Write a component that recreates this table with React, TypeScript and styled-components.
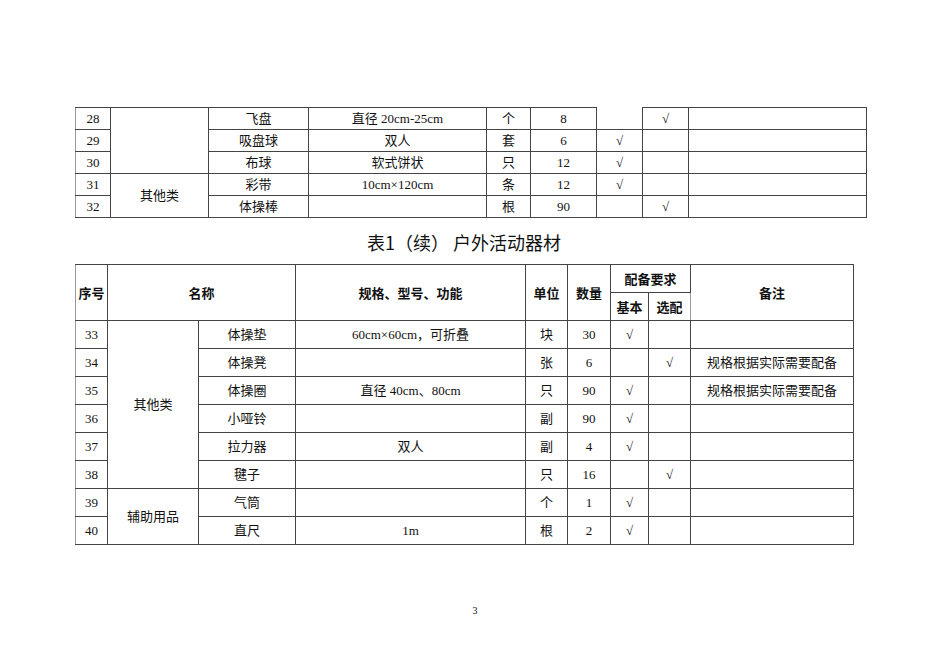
import { FC } from 'react';
import styled, { createGlobalStyle } from 'styled-components';

const GlobalStyle = createGlobalStyle`
    html, body {
        margin: 0;
        padding: 0;
        background: #fff;
    }
`;

const Page = styled.div`
    width: 950px;
    min-height: 672px;
    box-sizing: border-box;
    padding: 107px 0 0 75px;
    font-family: 'Liberation Serif', 'Noto Sans CJK SC', serif;
    color: #111;
`;

const Table = styled.table<{ $width: number }>`
    width: ${(p) => p.$width}px;
    border-collapse: collapse;
    table-layout: fixed;
    font-size: 13px;
`;

const Col = styled.col<{ $w: number }>`
    width: ${(p) => p.$w}px;
`;

const Cell = styled.td<{ $h: number; $soft?: boolean; $noTop?: boolean }>`
    height: ${(p) => p.$h}px;
    padding: 0;
    box-sizing: border-box;
    border: 1px solid #444;
    border-left-color: ${(p) => (p.$soft ? '#9a9a9a' : '#444')};
    border-top-style: ${(p) => (p.$noTop ? 'none' : 'solid')};
    text-align: center;
    vertical-align: middle;
    line-height: 16px;
    white-space: nowrap;
`;

const HeadCell = styled.th<{ $soft?: boolean }>`
    height: 28px;
    padding: 0;
    box-sizing: border-box;
    border: 1px solid #444;
    border-left-color: ${(p) => (p.$soft ? '#9a9a9a' : '#444')};
    font-family: 'Noto Sans CJK SC', sans-serif;
    font-weight: 700;
    font-size: 13px;
    text-align: center;
    vertical-align: middle;
    white-space: nowrap;
`;

const Title = styled.div`
    width: 778px;
    margin: 12px 0 10px;
    text-align: center;
    font-family: 'Noto Sans CJK SC', sans-serif;
    font-size: 18px;
    line-height: 24px;
    color: #111;
`;

const PageNo = styled.div`
    margin: 60px 0 0 -75px;
    width: 950px;
    text-align: center;
    font-size: 10px;
    font-family: 'Liberation Serif', serif;
`;

const tick = '√';

interface IRow {
    no: number;
    name: string;
    spec: string;
    unit: string;
    qty: string;
    basic?: boolean;
    optional?: boolean;
    note?: string;
}

const firstCols = [35, 98, 100, 178, 44, 66, 46, 46, 178];
const secondCols = [32, 91, 97, 230, 42, 43, 38, 42, 163];

const firstRows: IRow[] = [
    { no: 28, name: '飞盘', spec: '直径 20cm-25cm', unit: '个', qty: '8', optional: true },
    { no: 29, name: '吸盘球', spec: '双人', unit: '套', qty: '6', basic: true },
    { no: 30, name: '布球', spec: '软式饼状', unit: '只', qty: '12', basic: true },
    { no: 31, name: '彩带', spec: '10cm×120cm', unit: '条', qty: '12', basic: true },
    { no: 32, name: '体操棒', spec: '', unit: '根', qty: '90', optional: true },
];

const secondRows: IRow[] = [
    { no: 33, name: '体操垫', spec: '60cm×60cm，可折叠', unit: '块', qty: '30', basic: true },
    { no: 34, name: '体操凳', spec: '', unit: '张', qty: '6', optional: true, note: '规格根据实际需要配备' },
    { no: 35, name: '体操圈', spec: '直径 40cm、80cm', unit: '只', qty: '90', basic: true, note: '规格根据实际需要配备' },
    { no: 36, name: '小哑铃', spec: '', unit: '副', qty: '90', basic: true },
    { no: 37, name: '拉力器', spec: '双人', unit: '副', qty: '4', basic: true },
    { no: 38, name: '毽子', spec: '', unit: '只', qty: '16', optional: true },
    { no: 39, name: '气筒', spec: '', unit: '个', qty: '1', basic: true },
    { no: 40, name: '直尺', spec: '1m', unit: '根', qty: '2', basic: true },
];

// category cells: which row starts a group and how many rows it spans
const firstGroups: Record<number, { label: string; span: number }> = {
    28: { label: '', span: 3 },
    31: { label: '其他类', span: 2 },
};

const secondGroups: Record<number, { label: string; span: number }> = {
    33: { label: '其他类', span: 6 },
    39: { label: '辅助用品', span: 2 },
};

interface IBody {
    rows: IRow[];
    groups: Record<number, { label: string; span: number }>;
    h: number;
    openTop?: boolean;
}

const Body: FC<IBody> = ({ rows, groups, h, openTop }) => (
    <tbody>
        {rows.map((r, i) => (
            <tr key={r.no}>
                <Cell $h={h} $soft>{r.no}</Cell>
                {groups[r.no] && (
                    <Cell $h={h} rowSpan={groups[r.no].span}>
                        {groups[r.no].label}
                    </Cell>
                )}
                <Cell $h={h}>{r.name}</Cell>
                <Cell $h={h} $soft>{r.spec}</Cell>
                <Cell $h={h}>{r.unit}</Cell>
                <Cell $h={h}>{r.qty}</Cell>
                <Cell $h={h} $noTop={openTop && i === 0}>{r.basic ? tick : ''}</Cell>
                <Cell $h={h}>{r.optional ? tick : ''}</Cell>
                <Cell $h={h} $soft>{r.note}</Cell>
            </tr>
        ))}
    </tbody>
);

const TableOne: FC = () => (
    <Table $width={791}>
        <colgroup>
            {firstCols.map((w, i) => (
                <Col key={i} $w={w} />
            ))}
        </colgroup>
        <Body rows={firstRows} groups={firstGroups} h={22} openTop />
    </Table>
);

const TableTwo: FC = () => (
    <Table $width={778}>
        <colgroup>
            {secondCols.map((w, i) => (
                <Col key={i} $w={w} />
            ))}
        </colgroup>
        <thead>
            <tr>
                <HeadCell $soft rowSpan={2}>序号</HeadCell>
                <HeadCell colSpan={2} rowSpan={2}>名称</HeadCell>
                <HeadCell $soft rowSpan={2}>规格、型号、功能</HeadCell>
                <HeadCell rowSpan={2}>单位</HeadCell>
                <HeadCell rowSpan={2}>数量</HeadCell>
                <HeadCell colSpan={2}>配备要求</HeadCell>
                <HeadCell $soft rowSpan={2}>备注</HeadCell>
            </tr>
            <tr>
                <HeadCell>基本</HeadCell>
                <HeadCell>选配</HeadCell>
            </tr>
        </thead>
        <Body rows={secondRows} groups={secondGroups} h={28} />
    </Table>
);

const App: FC = () => (
    <>
        <GlobalStyle />
        <Page>
            <TableOne />
            <Title>表1（续） 户外活动器材</Title>
            <TableTwo />
            <PageNo>3</PageNo>
        </Page>
    </>
);

export default App;
